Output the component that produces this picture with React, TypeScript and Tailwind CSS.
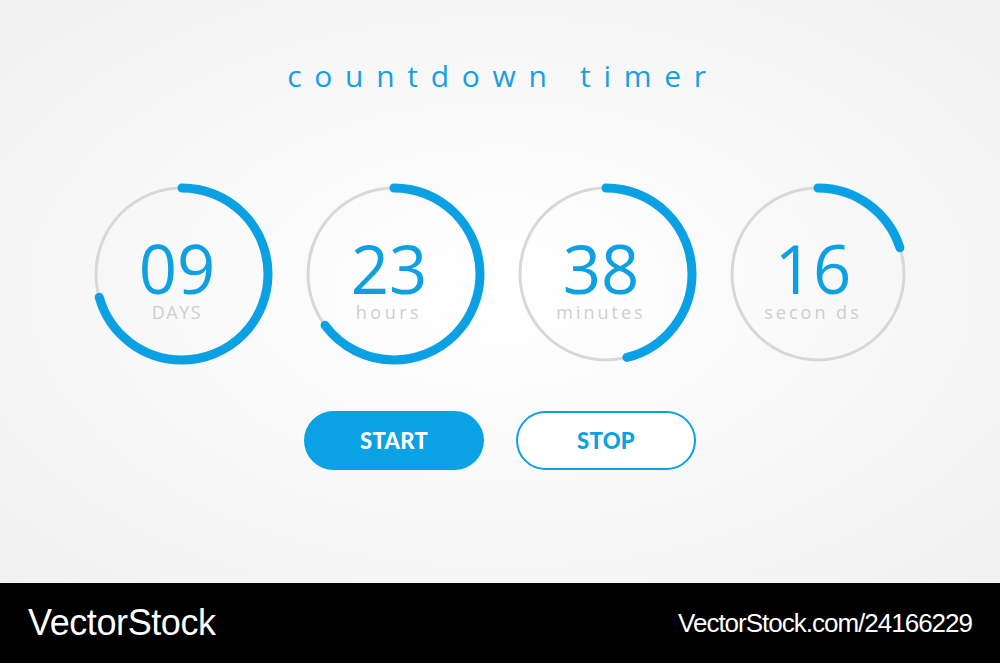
import React from "react";

type Unit = {
  value: string;
  label: string;
  progress: number;
  labelClass: string;
};

const units: Unit[] = [
  { value: "09", label: "DAYS", progress: 0.705, labelClass: "tracking-[1.5px]" },
  { value: "23", label: "hours", progress: 0.647, labelClass: "tracking-[3.5px]" },
  { value: "38", label: "minutes", progress: 0.46, labelClass: "tracking-[3px]" },
  { value: "16", label: "secon ds", progress: 0.2, labelClass: "tracking-[3px]" },
];

const RADIUS = 86;
const CIRC = 2 * Math.PI * RADIUS;

const Dial = ({ unit }: { unit: Unit }) => {
  const filled = CIRC * unit.progress;
  return (
    <div className="relative w-[184px] h-[184px]">
      <svg
        className="absolute inset-0"
        width="184"
        height="184"
        viewBox="0 0 184 184"
      >
        <circle cx="92" cy="92" r={RADIUS} fill="none" stroke="#d8d8d8" strokeWidth="3" />
        <circle
          cx="92"
          cy="92"
          r={RADIUS}
          fill="none"
          stroke="#0aa1e4"
          strokeWidth="9"
          strokeLinecap="round"
          strokeDasharray={`${filled} ${CIRC}`}
          transform="rotate(-90 92 92)"
        />
      </svg>
      <div className="relative flex flex-col items-center pt-[58px] pr-[10px]">
        <span className="text-[67px] leading-[56px] text-[#0ea0e2]">{unit.value}</span>
        <span className={`mt-[7px] text-[18px] leading-[18px] text-[#cfcfcf] ${unit.labelClass}`}>
          {unit.label}
        </span>
      </div>
    </div>
  );
};

export default function App() {
  return (
    <div
      className="w-[1000px] h-[663px] flex flex-col"
      style={{ fontFamily: '"Open Sans", sans-serif' }}
    >
      <div className="h-[583px] flex flex-col items-center bg-[radial-gradient(ellipse_at_center,#ffffff_0%,#f9f9f9_45%,#f1f1f1_100%)]">
        <h1 className="mt-[58px] pl-[6px] text-[30px] leading-[36px] tracking-[12.7px] text-[#17a0e1]">
          countdown timer
        </h1>
        <div className="mt-[88px] flex gap-[28px]">
          {units.map((u) => (
            <Dial key={u.label} unit={u} />
          ))}
        </div>
        <div
          className="mt-[45px] flex gap-[32px]"
          style={{ fontFamily: "Lato, sans-serif" }}
        >
          <button className="w-[180px] h-[59px] rounded-full bg-[#08a2e5] text-white text-[22px] font-black tracking-[0.3px]">
            START
          </button>
          <button className="w-[180px] h-[59px] rounded-full border-2 border-[#08a2e5] bg-white text-[#08a2e5] text-[22px] font-black tracking-[0.3px]">
            STOP
          </button>
        </div>
      </div>
      <div
        className="h-[80px] bg-black flex items-center justify-between pl-[28px] pr-[28px] text-white"
        style={{ fontFamily: '"Liberation Sans", Arial, sans-serif' }}
      >
        <span className="text-[36px] tracking-[-0.4px]">VectorStock</span>
        <span className="text-[26px] tracking-[-1px]">VectorStock.com/24166229</span>
      </div>
    </div>
  );
}
